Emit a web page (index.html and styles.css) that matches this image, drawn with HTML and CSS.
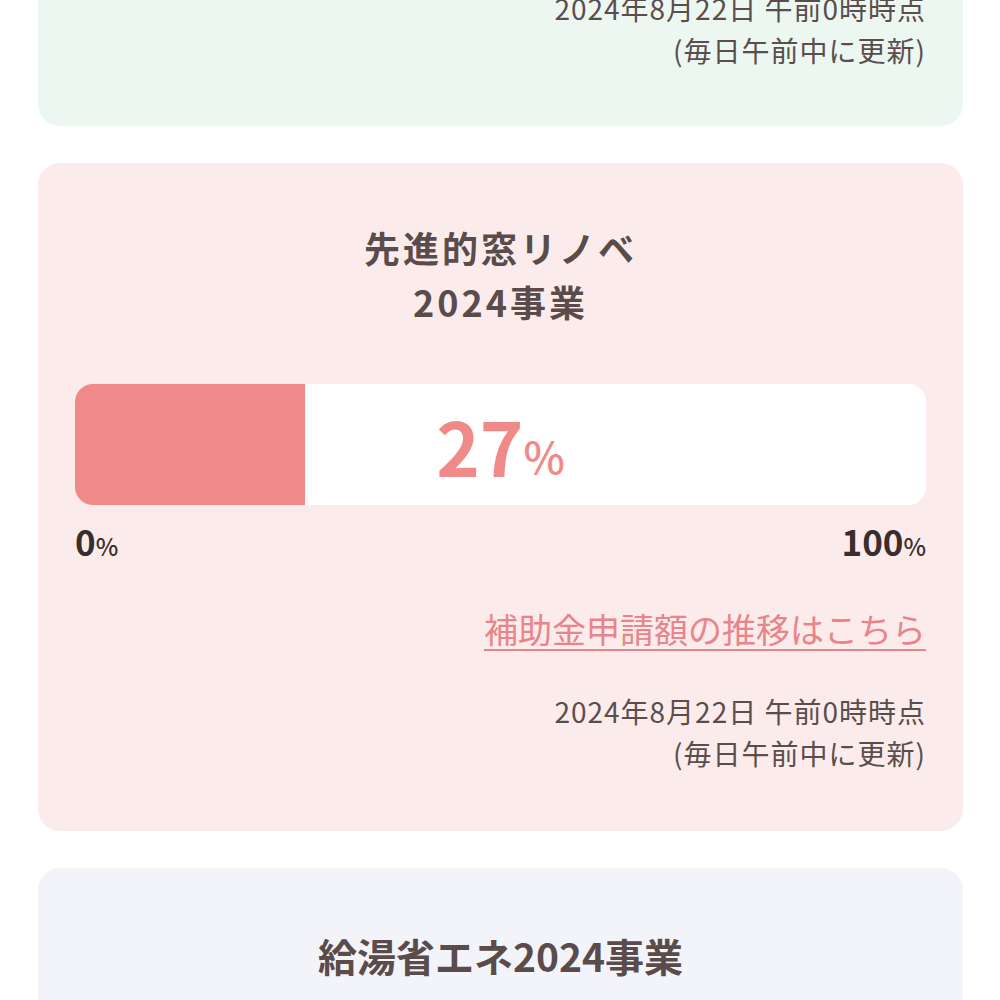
FILE: index.html
```html
<!DOCTYPE html>
<html lang="ja">
<head>
  <meta charset="UTF-8">
  <title>補助金申請状況</title>
  <link rel="stylesheet" href="styles.css">
</head>
<body>

  <!-- 子育てエコホーム（上部、途中まで） -->
  <section class="card card-green card-top">
    <p class="update-date">2024年8月22日 午前0時時点<br>(毎日午前中に更新)</p>
  </section>

  <!-- 先進的窓リノベ -->
  <section class="card card-pink">
    <h2 class="card-title">先進的窓リノベ<br>2024事業</h2>
    <div class="progress">
      <div class="progress-fill" style="width: 27%"></div>
      <div class="progress-label"><span class="num">27</span><span class="pct">%</span></div>
    </div>
    <div class="scale">
      <span><span class="num">0</span><span class="pct">%</span></span>
      <span><span class="num">100</span><span class="pct">%</span></span>
    </div>
    <div class="link-row">
      <a href="#" class="history-link">補助金申請額の推移はこちら</a>
    </div>
    <p class="update-date">2024年8月22日 午前0時時点<br>(毎日午前中に更新)</p>
  </section>

  <!-- 給湯省エネ -->
  <section class="card card-blue">
    <h2 class="card-title card-title-single">給湯省エネ2024事業</h2>
  </section>

</body>
</html>
```

FILE: styles.css
```css
body {
  margin: 0;
  padding: 0;
  background-color: #fff;
  font-family: "Noto Sans CJK JP", "Noto Sans", sans-serif;
  color: #5a4e4c;
}

.card {
  margin: 37px 37px 0 38px;
  padding: 57px 37px 57px;
  border-radius: 22px;
}

.card-top {
  margin-top: -62px;
  padding-top: 49px;
  padding-bottom: 55px;
}

.card-green {
  background-color: #edf7f2;
}

.card-pink {
  background-color: #fbeceb;
}

.card-blue {
  background-color: #f3f4fa;
  padding-top: 60px;
  height: 300px;
}

.card-title {
  margin: 0;
  text-align: center;
  font-size: 36px;
  line-height: 54px;
  font-weight: 700;
  letter-spacing: 3px;
  color: #5a4c4a;
}

.card-title-single {
  font-size: 39px;
  letter-spacing: 0;
}

/* Progress bar */
.progress {
  position: relative;
  margin-top: 56px;
  height: 121px;
  background: #fff;
  border-radius: 18px;
  overflow: hidden;
}

.progress-fill {
  height: 100%;
  background: #f08a88;
}

.progress-label {
  position: absolute;
  top: 0;
  left: 0;
  right: 0;
  bottom: 0;
  display: flex;
  justify-content: center;
  align-items: center;
  color: #f08a88;
  font-weight: 700;
}

.progress-label .num {
  font-size: 74px;
  line-height: 1;
}

.progress-label .pct {
  font-size: 44px;
  font-weight: 500;
  margin-top: 20px;
}

.scale {
  display: flex;
  justify-content: space-between;
  align-items: baseline;
  margin-top: 16px;
  height: 40px;
  line-height: 40px;
  color: #3a2e2c;
  font-weight: 700;
}

.scale .num {
  font-size: 35px;
}

.scale .pct {
  font-size: 24px;
  font-weight: 500;
}

.link-row {
  margin-top: 46px;
  text-align: right;
  line-height: 44px;
}

.history-link {
  font-size: 34px;
  color: #e8848a;
  text-decoration: underline;
  text-underline-offset: 6px;
  text-decoration-thickness: 2px;
}

.update-date {
  margin: 32px 0 0;
  text-align: right;
  font-size: 28px;
  line-height: 42px;
  letter-spacing: 1px;
  color: #5a4e4c;
}

.card-top .update-date {
  margin-top: 0;
}
```
